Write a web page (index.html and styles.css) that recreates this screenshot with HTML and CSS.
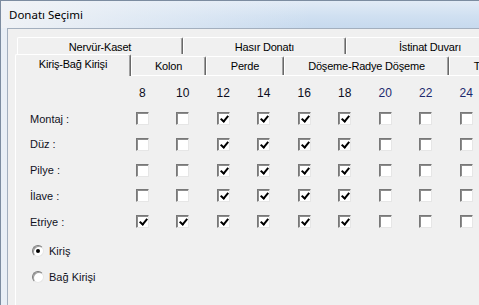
FILE: index.html
```html
<!DOCTYPE html>
<html lang="tr">
<head>
<meta charset="UTF-8">
<title>Donatı Seçimi</title>
<link rel="stylesheet" href="styles.css">
</head>
<body>
<div class="window">
  <div class="titlebar">Donatı Seçimi</div>
  <div class="frame">
    <div class="client">

      <!-- back row of tabs -->
      <div class="tab-row back">
        <div class="tab tab-nervur">Nervür-Kaset</div>
        <div class="tab tab-hasir">Hasır Donatı</div>
        <div class="tab tab-istinat">İstinat Duvarı</div>
      </div>

      <!-- front row of tabs -->
      <div class="tab-row front">
        <div class="tab active tab-kiris">Kiriş-Bağ Kirişi</div>
        <div class="tab tab-kolon">Kolon</div>
        <div class="tab tab-perde">Perde</div>
        <div class="tab tab-doseme">Döşeme-Radye Döşeme</div>
        <div class="tab tab-temel">Temel</div>
      </div>

      <div class="panel">
        <div class="grid" id="grid"></div>

        <div class="radios">
          <label class="radio-row"><span class="radio on"></span>Kiriş</label>
          <label class="radio-row"><span class="radio"></span>Bağ Kirişi</label>
        </div>
      </div>
    </div>
  </div>
</div>

<script>
  // diameters and which ones are ticked per row
  const sizes = [8, 10, 12, 14, 16, 18, 20, 22, 24];
  const rows = [
    { name: "Montaj :", on: [12, 14, 16, 18] },
    { name: "Düz :", on: [12, 14, 16, 18] },
    { name: "Pilye :", on: [12, 14, 16, 18] },
    { name: "İlave :", on: [12, 14, 16, 18] },
    { name: "Etriye :", on: [8, 10, 12, 14, 16, 18] }
  ];

  const grid = document.getElementById("grid");
  let html = "<span></span>";
  sizes.forEach(s => {
    html += `<span class="num${s >= 20 ? " blue" : ""}">${s}</span>`;
  });
  rows.forEach(r => {
    html += `<span class="lbl">${r.name}</span>`;
    sizes.forEach(s => {
      html += `<span class="cell"><span class="cb${r.on.includes(s) ? " on" : ""}"></span></span>`;
    });
  });
  grid.innerHTML = html;
</script>
</body>
</html>
```

FILE: styles.css
```css
html, body {
  margin: 0;
  padding: 0;
  height: 100%;
  overflow: hidden;
}

body {
  font-family: "Liberation Sans", Arial, sans-serif;
  font-size: 11px;
  color: #000;
  background: #f0f0f0;
}

.window {
  height: 100%;
  display: flex;
  flex-direction: column;
  border-left: 1px solid #7c8ca0;
  border-top: 1px solid #7c8ca0;
  box-sizing: border-box;
}

.titlebar {
  height: 27px;
  flex: 0 0 27px;
  padding-left: 8px;
  line-height: 28px;
  font-family: "Noto Sans", "Open Sans", sans-serif;
  font-size: 11.5px;
  color: #000;
  background:
    linear-gradient(to right, rgba(241, 243, 246, 0.95) 0%, rgba(236, 241, 247, 0.5) 35%, rgba(236, 241, 247, 0) 65%),
    linear-gradient(#e2ebf6, #d0e0f1 55%, #c7daee);
}

.frame {
  flex: 1;
  display: flex;
  padding-left: 6px;
  background: linear-gradient(to right, #e9eff6, #dbe6f2);
}

.client {
  flex: 1;
  display: flex;
  flex-direction: column;
  padding: 8px 0 0 7px;
  background: #f0f0f0;
  border-left: 1px solid #a3afbe;
  border-top: 1px solid #a3afbe;
}

/* tabs */
.tab-row {
  display: flex;
  white-space: nowrap;
  letter-spacing: -0.2px;
}

.tab-row.back {
  height: 17px;
  margin-left: 2px;
}

.tab-row.front {
  height: 21px;
  align-items: flex-end;
}

.tab {
  box-sizing: border-box;
  flex: 0 0 auto;
  text-align: center;
  background: #f0f0f0;
  border-top: 1px solid #fff;
  border-left: 1px solid #fff;
  border-right: 1px solid #696969;
  box-shadow: inset -1px 0 #a0a0a0;
  border-radius: 2px 2px 0 0;
  overflow: hidden;
}

.back .tab {
  height: 17px;
  line-height: 18px;
}

.front .tab {
  height: 19px;
  line-height: 19px;
}

.front .tab.active {
  height: 22px;
  line-height: 18px;
  margin-bottom: -1px;
  position: relative;
  z-index: 1;
}

.tab-nervur { width: 166px; }
.tab-hasir { width: 163px; }
.tab-istinat { width: 168px; }
.tab-kiris { width: 116px; }
.tab-kolon { width: 75px; }
.tab-perde { width: 78px; }
.tab-doseme { width: 165px; }
.tab-temel { width: 78px; }

.panel {
  flex: 1;
  background: #f0f0f0;
  border-top: 1px solid #fff;
  border-left: 1px solid #fff;
  padding: 4px 0 0 14px;
}

/* checkbox matrix */
.grid {
  display: grid;
  grid-template-columns: 92px repeat(9, 40.5px);
  grid-auto-rows: 25.75px;
  align-items: center;
}

.num {
  text-align: center;
  font-size: 12px;
  color: #0c0c1c;
}

.num.blue {
  color: #1c2a6e;
}

.lbl {
  color: #10121e;
}

.cell {
  display: flex;
  justify-content: center;
}

.cb {
  box-sizing: border-box;
  width: 13px;
  height: 13px;
  background: #fff;
  border: 1px solid;
  border-color: #787878 #e6e6e6 #e6e6e6 #787878;
  box-shadow: inset 1px 1px #8c8c8c;
  position: relative;
}

.cb.on::after {
  content: "";
  position: absolute;
  left: 4px;
  top: 1px;
  width: 3px;
  height: 6px;
  border-right: 2px solid #000;
  border-bottom: 2px solid #000;
  transform: rotate(40deg);
}

/* radio buttons */
.radios {
  margin-top: 3px;
  padding-left: 2px;
}

.radio-row {
  display: flex;
  align-items: center;
  height: 26px;
  color: #10121e;
}

.radio {
  box-sizing: border-box;
  width: 12px;
  height: 12px;
  margin-right: 5px;
  border-radius: 50%;
  background: #fff;
  border: 1px solid;
  border-color: #7a7a7a #e6e6e6 #e6e6e6 #7a7a7a;
  box-shadow: inset 1px 1px #a0a0a0;
  position: relative;
}

.radio.on::after {
  content: "";
  position: absolute;
  left: 3px;
  top: 3px;
  width: 4px;
  height: 4px;
  border-radius: 50%;
  background: #000;
}
```
